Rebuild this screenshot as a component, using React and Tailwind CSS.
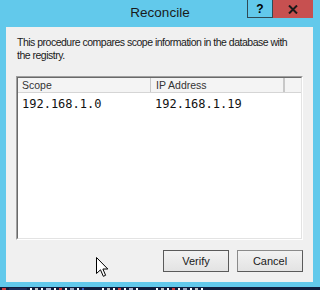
import React from "react";

function Cursor() {
  return (
    <svg width="13" height="21" viewBox="0 0 13 21" className="absolute left-[90px] top-[230px]">
      <path
        d="M0.5 0.5 L0.5 16.5 L4.5 12.8 L7.3 19.3 L9.6 18.3 L6.9 12 L11.8 12 Z"
        fill="#ffffff"
        stroke="#000000"
        strokeWidth="1"
        strokeLinejoin="miter"
      />
    </svg>
  );
}

export default function App() {
  return (
    <div className="w-[320px] h-[290px] bg-[#62c9eb] flex flex-col overflow-hidden" style={{ fontFamily: '"Liberation Sans", Arial, sans-serif' }}>
      {/* Title bar */}
      <div className="h-[27px] grid grid-cols-[73px_1fr_73px] shrink-0">
        <div />
        <div className="flex items-start justify-center pt-[4px] text-[13.5px] text-[#1a1a1a] leading-[18px]">Reconcile</div>
        <div className="flex items-start">
          <div className="w-[26px] h-[18px] border-l border-r border-b border-[#2f4a55] flex items-center justify-center text-[12px] font-bold text-black leading-none">?</div>
          <div className="w-[40px] h-[18px] bg-[#c75050] flex items-center justify-center">
            <svg width="10" height="9" viewBox="0 0 10 9">
              <path d="M1 0.5 L9 8.5 M9 0.5 L1 8.5" stroke="#1a1a1a" strokeWidth="2" />
            </svg>
          </div>
        </div>
      </div>
      {/* Client */}
      <div className="ml-[6px] mr-[7px] h-[255px] bg-[#f0f0f0] shrink-0 relative flex flex-col px-[10px]">
        <p className="pl-[1px] pt-[9px] text-[10.5px] leading-[13px] text-[#1a1a1a] tracking-[-0.5px] whitespace-nowrap">
          This procedure compares scope information in the database with
          <br />
          the registry.
        </p>
        <div className="mt-[14px] h-[164px] border-l border-t border-[#a0a0a0] border-r border-b border-r-white border-b-white">
          <div className="h-full bg-white border-l border-t border-[#696969] border-r border-b border-r-[#e3e3e3] border-b-[#e3e3e3] flex flex-col">
            <div className="h-[15px] flex bg-[#f4f4f4] border-b border-[#d5d5d5] text-[10.5px] text-[#333] leading-[14px]">
              <div className="w-[133px] pl-[4px] border-r border-[#c8c8c8]">Scope</div>
              <div className="w-[134px] pl-[5px] border-r-2 border-[#c8c8c8]">IP Address</div>
              <div className="flex-1" />
            </div>
            <div className="flex pt-[3px] text-[12px] leading-[16px] text-[#111]" style={{ fontFamily: '"DejaVu Sans Mono", monospace' }}>
              <div className="w-[137px] pl-[4px]">192.168.1.0</div>
              <div>192.168.1.19</div>
            </div>
          </div>
        </div>
        <div className="mt-[10px] flex justify-end gap-[8px]">
          <button className="w-[66px] h-[22px] border border-[#5a5a5a] bg-gradient-to-b from-[#f2f2f2] to-[#e3e3e3] text-[11px] text-[#1a1a1a] flex items-center justify-center">Verify</button>
          <button className="w-[66px] h-[22px] border border-[#8a8a8a] border-r-[#5a5a5a] border-b-[#5a5a5a] bg-gradient-to-b from-[#f2f2f2] to-[#e3e3e3] text-[11px] text-[#1a1a1a] flex items-center justify-center">Cancel</button>
        </div>
        <Cursor />
      </div>
      <div className="h-[5px] shrink-0" />
      <div className="flex-1 bg-[#0f1d3d] flex items-center gap-[3px] px-[2px]">
        <span className="w-[4px] h-[2px] bg-[#d04040]" />
        <span className="w-[18px] h-[2px] bg-[#1a2c5a]" />
        <span className="w-[2px] h-[2px] bg-white" />
        <span className="w-[3px] h-[2px] bg-[#c0c0c0]" />
        <span className="w-[2px] h-[2px] bg-white" />
        <span className="w-[5px] h-[2px] bg-[#b0b8d0]" />
        <span className="w-[2px] h-[2px] bg-white" />
        <span className="w-[3px] h-[2px] bg-[#d04040]" />
        <span className="w-[2px] h-[2px] bg-white" />
        <span className="w-[4px] h-[2px] bg-[#a0a8c0]" />
        <span className="w-[2px] h-[2px] bg-white" />
        <span className="w-[2px] h-[2px] bg-[#4060c0]" />
        <span className="w-[12px] h-[2px] bg-[#0f1d3d]" />
        <span className="w-[2px] h-[2px] bg-white" />
        <span className="w-[3px] h-[2px] bg-[#c0c0c0]" />
        <span className="w-[2px] h-[2px] bg-white" />
        <span className="w-[3px] h-[2px] bg-[#d04040]" />
        <span className="w-[2px] h-[2px] bg-white" />
        <span className="w-[4px] h-[2px] bg-[#b0b8d0]" />
        <span className="w-[2px] h-[2px] bg-white" />
        <span className="w-[12px] h-[2px] bg-[#0f1d3d]" />
        <span className="w-[2px] h-[2px] bg-white" />
        <span className="w-[3px] h-[2px] bg-[#c0c0c0]" />
        <span className="w-[2px] h-[2px] bg-white" />
        <span className="w-[3px] h-[2px] bg-[#d04040]" />
        <span className="w-[2px] h-[2px] bg-white" />
        <span className="w-[4px] h-[2px] bg-[#a0a8c0]" />
        <span className="w-[2px] h-[2px] bg-white" />
        <span className="w-[3px] h-[2px] bg-[#c0c0c0]" />
        <span className="w-[2px] h-[2px] bg-white" />
      </div>
    </div>
  );
}
